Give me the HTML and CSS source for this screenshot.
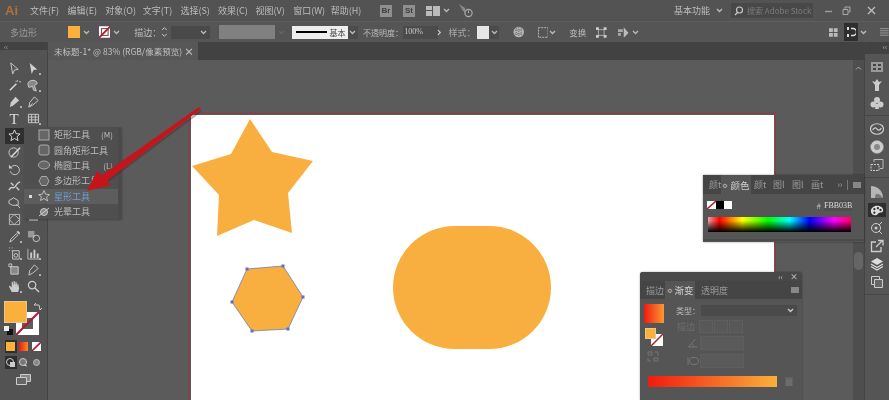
FILE: index.html
```html
<!DOCTYPE html>
<html lang="en">
<head>
    <meta charset="UTF-8">
    <title>Adobe Illustrator</title>
    <link rel="stylesheet" href="styles.css">
</head>
<body>
<div class="app">

    <!-- Menu bar -->
    <div class="menubar">
        <span class="logo">Ai</span>
        <nav class="menus">
            <span>文件(F)</span><span>编辑(E)</span><span>对象(O)</span><span>文字(T)</span><span>选择(S)</span><span>效果(C)</span><span>视图(V)</span><span>窗口(W)</span><span>帮助(H)</span>
        </nav>
        <span class="bridge">Br</span>
        <span class="bridge stock">St</span>
        <svg class="layout-icon" width="14" height="10" viewBox="0 0 14 10"><path d="M0 0h6v4H0zM0 5h6v5H0zM7 0h7v10H7z" fill="#bbb"/></svg>
        <svg class="chev" width="7" height="5" viewBox="0 0 7 5"><path d="M1 1l2.500 2.500L6 1" stroke="#bbb" stroke-width="1.300" fill="none"/></svg>
        <svg class="gpu-icon" width="16" height="15" viewBox="0 0 16 15"><path d="M1 1l6 4 1 4-3-1z" fill="#888"/><circle cx="10.500" cy="10" r="3.600" fill="none" stroke="#aaa" stroke-width="1.200"/><path d="M10.500 7.500v2.500" stroke="#aaa"/></svg>
        <span class="workspace-name">基本功能</span>
        <svg class="chev" width="7" height="5" viewBox="0 0 7 5"><path d="M1 1l2.500 2.500L6 1" stroke="#bbb" stroke-width="1.300" fill="none"/></svg>
        <div class="search">
            <svg width="10" height="10" viewBox="0 0 10 10"><circle cx="5.500" cy="4" r="3" fill="none" stroke="#ccc" stroke-width="1.100"/><path d="M3.500 6.500L1 9" stroke="#ccc" stroke-width="1.200"/></svg>
            <span>搜索 Adobe Stock</span>
        </div>
        <div class="window-btns">
            <svg width="9" height="9" viewBox="0 0 9 9"><path d="M1 5.500h7" stroke="#999" stroke-width="1.500"/></svg>
            <svg width="9" height="9" viewBox="0 0 9 9"><path d="M1 3.500h5v5H1zM3 3V1h5v5H6.500" fill="none" stroke="#aaa"/></svg>
            <svg width="9" height="9" viewBox="0 0 9 9"><path d="M1 1l7 7M8 1L1 8" stroke="#bbb" stroke-width="1.400"/></svg>
        </div>
    </div>

    <!-- Control bar -->
    <div class="optbar">
        <span class="sel-name">多边形</span>
        <span class="fill-swatch"></span>
        <svg class="chev" width="7" height="5" viewBox="0 0 7 5"><path d="M1 1l2.500 2.500L6 1" stroke="#bbb" stroke-width="1.300" fill="none"/></svg>
        <svg class="stroke-swatch" width="12" height="12" viewBox="0 0 12 12"><rect width="12" height="12" fill="#fff"/><path d="M0 12L12 0" stroke="#b01c2e" stroke-width="2"/><rect x="2.500" y="2.500" width="7" height="7" fill="none" stroke="#77323a"/></svg>
        <svg class="chev" width="7" height="5" viewBox="0 0 7 5"><path d="M1 1l2.500 2.500L6 1" stroke="#bbb" stroke-width="1.300" fill="none"/></svg>
        <span class="opt-label stroke-label">描边：</span>
        <svg class="spinner" width="7" height="12" viewBox="0 0 7 12"><path d="M1 4l2.500-2.500L6 4M1 8l2.500 2.500L6 8" stroke="#ccc" fill="none"/></svg>
        <span class="dark-input"></span>
        <span class="dark-drop"><svg width="7" height="5" viewBox="0 0 7 5"><path d="M1 1l2.500 2.500L6 1" stroke="#bbb" stroke-width="1.300" fill="none"/></svg></span>
        <span class="grey-box"></span>
        <svg class="grey-chev" width="7" height="5" viewBox="0 0 7 5"><path d="M1 1l2.500 2.500L6 1" stroke="#6a6a6a" stroke-width="1.200" fill="none"/></svg>
        <span class="stroke-preview"><i></i><b>基本</b></span>
        <span class="dark-drop small"><svg width="7" height="5" viewBox="0 0 7 5"><path d="M1 1l2.500 2.500L6 1" stroke="#bbb" stroke-width="1.300" fill="none"/></svg></span>
        <span class="opt-label opacity-label">不透明度：</span>
        <span class="opacity-input">100%</span>
        <svg class="opacity-more" width="5" height="7" viewBox="0 0 5 7"><path d="M1 1l2.500 2.500L1 6" stroke="#ccc" stroke-width="1.200" fill="none"/></svg>
        <span class="opt-label style-label">样式：</span>
        <span class="style-box"></span>
        <span class="dark-drop small"><svg width="7" height="5" viewBox="0 0 7 5"><path d="M1 1l2.500 2.500L6 1" stroke="#bbb" stroke-width="1.300" fill="none"/></svg></span>
        <svg class="globe" width="12" height="12" viewBox="0 0 12 12"><circle cx="6" cy="6" r="5.500" fill="#b5b5b5"/><path d="M2 4h8M2 8h8M6 1v10M3.500 2v8M8.500 2v8" stroke="#666" stroke-dasharray="1 1"/></svg>
        <svg class="dash-rect" width="11" height="11" viewBox="0 0 11 11"><rect x=".5" y=".5" width="10" height="10" fill="none" stroke="#bbb" stroke-dasharray="2 1"/></svg>
        <svg class="chev" width="7" height="5" viewBox="0 0 7 5"><path d="M1 1l2.500 2.500L6 1" stroke="#bbb" stroke-width="1.300" fill="none"/></svg>
        <span class="opt-label transform-label">变换</span>
        <svg class="align-a" width="11" height="11" viewBox="0 0 11 11"><path d="M2.500 2.500h6v6h-6z" fill="none" stroke="#aaa"/><path d="M0 0h3v3H0zM8 0h3v3H8zM0 8h3v3H0zM8 8h3v3H8z" fill="#ccc"/></svg>
        <svg class="align-b" width="12" height="12" viewBox="0 0 12 12"><path d="M0 3h5v3H0zM0 7h3v3H0z" fill="#aaa"/><path d="M6 1v11l5-5z" fill="#bbb"/></svg>
        <svg class="chev" width="7" height="5" viewBox="0 0 7 5"><path d="M1 1l2.500 2.500L6 1" stroke="#bbb" stroke-width="1.300" fill="none"/></svg>
        <svg class="snap-grid" width="9" height="9" viewBox="0 0 9 9"><path d="M0 0h4v4H0zM5 0h4v4H5zM0 5h4v4H0zM5 5h4v4H5z" fill="#bbb"/></svg>
        <span class="magnet"><svg width="9" height="10" viewBox="0 0 9 10"><path d="M4 1.500h2a3 3 0 010 7H4" fill="none" stroke="#ddd" stroke-width="1.400"/><path d="M0 0h2v3H0zM0 7h2v3H0z" fill="#ddd"/></svg></span>
        <svg class="chev" width="7" height="5" viewBox="0 0 7 5"><path d="M1 1l2.500 2.500L6 1" stroke="#bbb" stroke-width="1.300" fill="none"/></svg>
        <svg class="list-icon" width="9" height="8" viewBox="0 0 9 8"><path d="M0 .5h9M0 2.700h9M0 5h9M0 7.300h9" stroke="#999"/></svg>
    </div>

    <div class="main">

        <!-- Tools -->
        <aside class="toolbar">
            <div class="tool-head">‹‹</div>
            <div class="tool-grid">
                <svg viewBox="0 0 14 14"><path d="M3 1l8 7-4 .5L5 13z" fill="none" stroke="#ccc"/></svg>
                <svg viewBox="0 0 14 14"><path d="M3 1l8 7-4 .5L5 13z" fill="#d0d0d0"/><rect x="13" y="12" width="2" height="2" fill="#bbb"/></svg>
                <svg viewBox="0 0 14 14"><path d="M2 12l7-7" stroke="#ddd" stroke-width="1.500"/><path d="M10 1v2M12 3h2M8 2l1 1" stroke="#ccc"/></svg>
                <svg viewBox="0 0 14 14"><path d="M1 6a5 4 0 0110-1l-3 2 2 6-3-1-1-4-4 1z" fill="#888" stroke="#ccc"/><rect x="13" y="12" width="2" height="2" fill="#bbb"/></svg>
                <svg viewBox="0 0 14 14"><path d="M2 13l1-5 5-6 4 4-6 5z" fill="#ccc"/><rect x="13" y="12" width="2" height="2" fill="#bbb"/></svg>
                <svg viewBox="0 0 14 14"><path d="M2 13l1-5 5-6 4 4-6 5z" fill="none" stroke="#ccc"/><path d="M2 13l4-4" stroke="#ccc"/></svg>
                <span class="tool-t">T</span>
                <svg viewBox="0 0 14 14"><path d="M1.500 2.500h11v9h-11zM1.500 5.500h11M1.500 8.500h11M5 2.500v9M9 2.500v9" fill="none" stroke="#ccc"/><rect x="13" y="12" width="2" height="2" fill="#bbb"/></svg>
                <span class="tool-on"><svg viewBox="0 0 14 14"><path d="M7 1l1.800 4 4.200.4-3.200 2.800 1 4.300L7 10.200l-3.800 2.300 1-4.300L1 5.400 5.200 5z" fill="none" stroke="#ddd"/></svg></span>
                <span></span>
                <svg viewBox="0 0 14 14"><circle cx="6" cy="7" r="5" fill="none" stroke="#ccc"/><path d="M3 12L13 2" stroke="#ddd" stroke-width="1.500"/></svg>
                <span></span>
                <svg viewBox="0 0 14 14"><path d="M3 5a5 5 0 11-.5 4" fill="none" stroke="#ccc"/><path d="M1 2v4h4" fill="#ccc"/></svg>
                <span></span>
                <svg viewBox="0 0 14 14"><path d="M1 12c3-6 4 0 7-4s2-4 5-5M3 4l3 3M9 9l3 3" fill="none" stroke="#ccc" stroke-width="1.500"/></svg>
                <span></span>
                <svg viewBox="0 0 14 14"><path d="M1 5l5-3 5 3v5H5L1 8z" fill="none" stroke="#ccc"/><path d="M9 9l4 4" stroke="#ccc"/></svg>
                <span></span>
                <svg viewBox="0 0 14 14"><path d="M1.500 1.500h11v11h-11zM1.500 7l5-5.500L12.500 7l-6 5.500z" fill="none" stroke="#bbb"/></svg>
                <span class="tool-mini"></span>
                <svg viewBox="0 0 14 14"><path d="M2 13l1-3 6-6 1.500 1.500-6 6z" fill="none" stroke="#ccc"/><path d="M9 2l3 3 1-2-2-2z" fill="#ccc"/><rect x="13" y="12" width="2" height="2" fill="#bbb"/></svg>
                <svg viewBox="0 0 14 14"><rect x="1" y="1" width="7" height="7" fill="#999"/><circle cx="10" cy="9" r="3.500" fill="none" stroke="#ccc"/></svg>
                <svg viewBox="0 0 14 14"><path d="M5 4h7v9H5z" fill="none" stroke="#ccc"/><circle cx="8.500" cy="9" r="2" fill="none" stroke="#ccc"/><path d="M1 1h1M4 1h1M1 4h1M4 4h1" stroke="#ccc"/><rect x="13" y="12" width="2" height="2" fill="#bbb"/></svg>
                <svg viewBox="0 0 14 14"><path d="M1 2v11h12" fill="none" stroke="#bbb"/><path d="M3.500 12V6h2v6zM7 12V3h2v9zM10.500 12V7h2v5z" fill="#ccc"/><rect x="13" y="12" width="2" height="2" fill="#bbb"/></svg>
                <svg viewBox="0 0 14 14"><path d="M3 4h8v8H3z" fill="#888" stroke="#ccc"/><path d="M1 1h3v3H1z" fill="none" stroke="#ccc"/></svg>
                <svg viewBox="0 0 14 14"><path d="M2 13l1-5 5-6 4 4-6 5z" fill="none" stroke="#ccc"/><rect x="13" y="12" width="2" height="2" fill="#bbb"/></svg>
                <svg viewBox="0 0 14 14"><path d="M4 13L1 7l1-1 2 2V2h1l1 4V1h1l1 5V2h1l1 5V4h1l1 5-1 4z" fill="#ccc"/><rect x="13" y="12" width="2" height="2" fill="#bbb"/></svg>
                <svg viewBox="0 0 14 14"><circle cx="5.500" cy="5.500" r="4" fill="none" stroke="#ccc" stroke-width="1.300"/><path d="M8.500 8.500l4.500 4.500" stroke="#ccc" stroke-width="1.500"/></svg>
            </div>

            <div class="fill-stroke">
                <span class="big-fill"></span>
                <svg class="big-stroke" width="23" height="23" viewBox="0 0 23 23"><rect width="23" height="23" fill="#fff"/><rect x="6" y="6" width="11" height="11" fill="#5d5d5d"/><path d="M0 23L23 0" stroke="#b01c2e" stroke-width="2"/></svg>
                <svg class="swap" width="9" height="8" viewBox="0 0 9 8"><path d="M1 2h5l1 5M1 2l2-2M7 7l2-2" fill="none" stroke="#ccc"/></svg>
                <svg class="default-colors" width="9" height="9" viewBox="0 0 9 9"><rect x="3" y="3" width="6" height="6" fill="#111"/><rect x="0" y="0" width="5" height="5" fill="#eee"/></svg>
            </div>

            <div class="mode-row">
                <span class="mode-box on"><i class="solid"></i></span>
                <span class="mode-box"><i class="grad"></i></span>
                <span class="mode-box"><svg width="9" height="9" viewBox="0 0 9 9"><rect width="9" height="9" fill="#fff"/><path d="M0 9L9 0" stroke="#b01c2e" stroke-width="1.600"/></svg></span>
            </div>
            <div class="mode-row draw">
                <span class="mode-box on"><svg width="9" height="9" viewBox="0 0 9 9"><circle cx="4" cy="4" r="3.500" fill="none" stroke="#ccc"/><rect x="4" y="4" width="5" height="5" fill="#ccc"/></svg></span>
                <span class="mode-box"><svg width="9" height="9" viewBox="0 0 9 9"><circle cx="4" cy="4" r="3.500" fill="#777" stroke="#ccc"/><path d="M5 7l3 1" stroke="#ccc"/></svg></span>
                <span class="mode-box"><svg width="7" height="7" viewBox="0 0 7 7"><circle cx="3.500" cy="3.500" r="3" fill="#888" stroke="#bbb"/></svg></span>
            </div>
            <svg class="screen-mode" width="15" height="11" viewBox="0 0 15 11"><path d="M4.500.5h10v7h-10z" fill="#888" stroke="#ccc"/><path d="M.5 3.500h10v7H.5z" fill="#666" stroke="#ccc"/></svg>
        </aside>

        <div class="workspace">
            <div class="tabs">
                <div class="doc-tab"><span>未标题-1* @ 83% (RGB/像素预览)</span><b>×</b></div>
            </div>
            <div class="canvas">
                <svg class="artwork" width="805" height="340" viewBox="48 60 805 340">
                    <rect x="189.500" y="113" width="586" height="296" fill="none" stroke="#8f3a44" stroke-width="1.200"/>
                    <rect x="191" y="115" width="583" height="290" fill="#fff"/>
                    <path d="M250 119L272 152 313 161 288 193 292 233 254 220 217 236 219 195 192 166 231 154z" fill="#f9af40"/>
                    <path d="M247 269L283 266 303 297 288 329 252 331 232 302z" fill="#f9af40" stroke="#6f7fb0" stroke-width=".8"/>
                    <g fill="#5a6fd0">
                        <rect x="245.500" y="267.500" width="3" height="3"/><rect x="281.500" y="264.500" width="3" height="3"/><rect x="301.500" y="295.500" width="3" height="3"/><rect x="286.500" y="327.500" width="3" height="3"/><rect x="250.500" y="329.500" width="3" height="3"/><rect x="230.500" y="300.500" width="3" height="3"/>
                    </g>
                    <rect x="393" y="226" width="158" height="123" rx="61.500" fill="#f9af40"/>
                </svg>
            </div>
        </div>

        <div class="scrollbar">
            <svg width="7" height="4" viewBox="0 0 7 4"><path d="M1 3.500l2.500-2.500L6 3.500" stroke="#aaa" fill="none"/></svg>
            <span class="thumb"></span>
        </div>

        <!-- Panel dock -->
        <aside class="dock">
            <div class="dock-head">‹‹</div>
            <div class="dock-group first">
                <svg viewBox="0 0 14 14"><path d="M1 2h12v10H1z" fill="#999"/><path d="M3 4h3v2H3zM8 4h3v2H8zM3 8h3v2H3zM8 8h3v2H8z" fill="#444"/></svg>
                <svg viewBox="0 0 14 14"><path d="M5 13V7L2 3l3 1 2-3 2 3 3-1-3 4v6z" fill="#ccc"/></svg>
                <svg viewBox="0 0 14 14"><circle cx="7" cy="4" r="3" fill="#ccc"/><circle cx="3.500" cy="8.500" r="3" fill="#ccc"/><circle cx="10.500" cy="8.500" r="3" fill="#ccc"/><path d="M6 8h2l1 5H5z" fill="#ccc"/></svg>
            </div>
            <div class="dock-group">
                <svg viewBox="0 0 16 14"><ellipse cx="8" cy="7" rx="7.500" ry="6" fill="none" stroke="#ccc" stroke-width="1.400"/><path d="M3 8c2-3 4-3 5-1s3 2 5-1" fill="none" stroke="#ccc" stroke-width="1.400"/></svg>
                <svg viewBox="0 0 14 14"><circle cx="7" cy="7" r="6.500" fill="#ccc" stroke="#999" stroke-dasharray="1 1"/><circle cx="7" cy="7" r="3" fill="#888"/></svg>
                <svg viewBox="0 0 14 14"><path d="M4 4V1.500h9v9h-3" fill="none" stroke="#bbb"/><path d="M1 6.500h8v6H1z" fill="none" stroke="#ccc" stroke-dasharray="2 1"/></svg>
            </div>
            <div class="dock-group last">
                <svg viewBox="0 0 14 14"><path d="M1 1c7 0 12 5 12 12H1z" fill="#b5b5b5"/><path d="M5 13c0-5 3-6 8 0z" fill="#777"/></svg>
                <span class="dock-on"><svg viewBox="0 0 16 14"><path d="M8 2c4 0 7 2 7 5s-2 3-4 3-2 3-5 3-5-2-5-5 3-6 7-6z" fill="#ddd"/><circle cx="5" cy="6" r="1.300" fill="#333"/><circle cx="9" cy="5" r="1.300" fill="#333"/><circle cx="12" cy="7" r="1.300" fill="#333"/><circle cx="5" cy="10" r="1.300" fill="#333"/></svg></span>
                <svg viewBox="0 0 14 14"><circle cx="6" cy="7" r="4.500" fill="none" stroke="#ccc"/><circle cx="6" cy="7" r="1.500" fill="#ccc"/><path d="M9 4l3-3M9 10l3 3" stroke="#ccc"/></svg>
                <svg viewBox="0 0 14 14"><path d="M6 3H1.500v9.500h9.500V8" fill="none" stroke="#ccc" stroke-width="1.300"/><path d="M6 8l6-6M8 1.500h5v5" fill="none" stroke="#ccc" stroke-width="1.300"/></svg>
                <svg viewBox="0 0 14 14"><path d="M7 1l6 3.500L7 8 1 4.500z" fill="#ddd"/><path d="M1 7l6 3.500L13 7M1 9.500L7 13l6-3.500" fill="none" stroke="#ddd" stroke-width="1.200"/></svg>
                <svg viewBox="0 0 14 14"><path d="M1.500 1.500h8v8h-8z" fill="none" stroke="#ccc"/><path d="M4.500 4.500h8v8h-8z" fill="#666" stroke="#ccc"/></svg>
            </div>
        </aside>
    </div>

    <!-- Shape tool flyout -->
    <div class="flyout">
        <div class="fly-item"><svg viewBox="0 0 12 12"><rect x="1" y="1" width="10" height="10" fill="#666" stroke="#aaa"/></svg><span>矩形工具</span><em>(M)</em></div>
        <div class="fly-item"><svg viewBox="0 0 12 12"><rect x="1" y="1" width="10" height="10" rx="2" fill="#666" stroke="#aaa"/></svg><span>圆角矩形工具</span></div>
        <div class="fly-item"><svg viewBox="0 0 12 12"><ellipse cx="6" cy="6" rx="5.500" ry="4" fill="#666" stroke="#aaa"/></svg><span>椭圆工具</span><em>(L)</em></div>
        <div class="fly-item"><svg viewBox="0 0 12 12"><path d="M3.500 1.500h5L11 6 8.500 10.500h-5L1 6z" fill="#666" stroke="#aaa"/></svg><span>多边形工具</span></div>
        <div class="fly-item active"><svg viewBox="0 0 12 12"><path d="M6 .5l1.600 3.700 3.900.4-2.900 2.500.9 3.900L6 8.500l-3.500 2 .9-3.900L.5 4.600l3.900-.4z" fill="none" stroke="#bbb"/></svg><span>星形工具</span></div>
        <div class="fly-item"><svg viewBox="0 0 12 12"><circle cx="6" cy="6" r="3.500" fill="#888" stroke="#ccc"/><path d="M1 10L11 2" stroke="#ccc"/></svg><span>光晕工具</span></div>
    </div>

    <!-- Color panel -->
    <section class="panel color-panel">
        <div class="panel-tabs">
            <span class="tab-dim tab-first">颜t</span>
            <span class="tab-active"><small>≎</small>颜色</span>
            <span class="tab-dim">颜t</span><span class="tab-dim">图l</span><span class="tab-dim">图l</span><span class="tab-dim">画t</span>
            <span class="panel-tools">›› <i>|</i><svg width="8" height="6" viewBox="0 0 8 6"><rect width="8" height="6" fill="#888"/></svg></span>
        </div>
        <div class="color-row">
            <svg width="9" height="8" viewBox="0 0 9 8"><rect width="9" height="8" fill="#fff"/><path d="M0 8L9 0" stroke="#b01c2e" stroke-width="1.500"/></svg>
            <span class="chip black"></span><span class="chip white"></span>
            <span class="hash">#</span><span class="hex">FBB03B</span>
        </div>
        <div class="spectrum"></div>
        <div class="panel-grip"></div>
    </section>

    <!-- Gradient panel -->
    <section class="panel gradient-panel">
        <div class="panel-top"><span>‹‹</span><b>×</b></div>
        <div class="panel-tabs">
            <span class="tab-dim">描边</span>
            <span class="tab-active"><small>≎</small>渐变</span>
            <span class="tab-dim">透明度</span>
            <span class="panel-tools"><svg width="8" height="6" viewBox="0 0 8 6"><rect width="8" height="6" fill="#888"/></svg></span>
        </div>
        <div class="grad-body">
            <div class="grad-left">
                <span class="grad-thumb"></span>
                <div class="grad-swatches">
                    <span class="mini-fill"></span>
                    <svg class="mini-stroke" width="12" height="12" viewBox="0 0 12 12"><rect width="12" height="12" fill="#fff"/><path d="M0 12L12 0" stroke="#b01c2e" stroke-width="1.500"/></svg>
                </div>
                <svg class="reverse" width="12" height="11" viewBox="0 0 12 11"><path d="M1 1h4v3H1zM7 7h4v3H7zM8 1h3v4M1 7v3h3" fill="none" stroke="#777"/></svg>
            </div>
            <div class="grad-right">
                <div class="grad-row type-row"><label>类型：</label><span class="grad-select"><svg width="7" height="5" viewBox="0 0 7 5"><path d="M1 1l2.500 2.500L6 1" stroke="#ccc" stroke-width="1.300" fill="none"/></svg></span></div>
                <div class="grad-row btn-row"><label class="off">描边</label><span class="off-btn"></span><span class="off-btn"></span><span class="off-btn"></span></div>
                <div class="grad-row field-row"><svg width="11" height="10" viewBox="0 0 11 10"><path d="M1 9h9M1 9l7-8M6 9a4 4 0 00-1-3" fill="none" stroke="#777"/></svg><span class="off-select"></span></div>
                <div class="grad-row field-row"><svg width="12" height="10" viewBox="0 0 12 10"><ellipse cx="7" cy="5" rx="4.500" ry="3.500" fill="none" stroke="#777"/><path d="M1 1v8" stroke="#777"/></svg><span class="off-select"></span></div>
            </div>
        </div>
        <div class="grad-bar-row">
            <span class="grad-bar"></span>
            <svg width="8" height="9" viewBox="0 0 8 9"><path d="M1 2h6v7H1zM0 1h8M3 0h2" fill="#6c6c6c" stroke="#6c6c6c"/></svg>
        </div>
    </section>

    <!-- Red arrow annotation -->
    <svg class="arrow" width="889" height="400" viewBox="0 0 889 400">
        <path d="M201 111L108 181" stroke="#3a2a2a" stroke-opacity=".4" stroke-width="2"/>
        <path d="M199 107L201 109 107 181 111 185 87 191 97 171 102 175z" fill="#c3151b"/>
    </svg>
</div>
</body>
</html>
```

FILE: styles.css
```css
* {
    box-sizing: border-box;
}

html, body {
    margin: 0;
    padding: 0;
}

/* the reference is a soft, recompressed screenshot */
.app {
    position: relative;
    display: flex;
    flex-direction: column;
    width: 889px;
    height: 400px;
    overflow: hidden;
    background-color: #535353;
    color: #bcbcbc;
    font-family: "Noto Sans CJK SC", "Noto Sans", sans-serif;
    font-size: 9px;
    filter: blur(.4px);
}

.chev {
    flex: none;
}

/* Menu bar */
.menubar {
    display: flex;
    align-items: center;
    height: 21px;
    padding-left: 5px;
}

.logo {
    width: 25px;
    font-family: "Liberation Sans", sans-serif;
    font-size: 13px;
    font-weight: bold;
    color: #b0703a;
}

.menus {
    display: flex;
    width: 340px;
}

.menus span {
    width: 37.6px;
    font-size: 9px;
    white-space: nowrap;
}

.bridge {
    width: 12px;
    height: 12px;
    margin-left: 10px;
    background-color: #8f8f8f;
    color: #3e3e3e;
    font-family: "Liberation Sans", sans-serif;
    font-size: 8px;
    font-weight: bold;
    line-height: 12px;
    text-align: center;
}

.stock {
    margin-left: 11px;
}

.layout-icon {
    margin-left: 11px;
}

.menubar > .chev {
    margin-left: 3px;
}

.gpu-icon {
    margin-left: 8px;
}

.workspace-name {
    margin-left: 200px;
    font-size: 9px;
    white-space: nowrap;
}

.menubar > .workspace-name + .chev {
    margin-left: 6px;
}

.search {
    display: flex;
    align-items: center;
    gap: 3px;
    width: 82px;
    height: 15px;
    margin-left: 8px;
    padding-left: 3px;
    background-color: #484848;
    color: #7c7c7c;
    font-size: 8px;
    white-space: nowrap;
}

.window-btns {
    display: flex;
    gap: 9px;
    margin-left: 11px;
}

.window-btns svg:last-child {
    margin-left: 7px;
}

/* Control bar */
.optbar {
    display: flex;
    align-items: center;
    height: 21px;
    padding-left: 10px;
    border-top: 1px solid #5e5e5e;
    background-color: #555;
}

.sel-name {
    width: 61px;
    color: #9a9a9a;
}

.fill-swatch {
    width: 12px;
    height: 12px;
    margin-right: 3px;
    background-color: #fbb03b;
}

.optbar > .chev {
    margin-right: 3px;
}

.stroke-swatch {
    margin-left: 6px;
    margin-right: 3px;
}

.opt-label {
    white-space: nowrap;
}

.stroke-label {
    margin-left: 11px;
    width: 28px;
}

.spinner {
    margin-right: 3px;
}

.dark-input {
    width: 27px;
    height: 13px;
    background-color: #494949;
}

.dark-drop {
    display: flex;
    align-items: center;
    justify-content: center;
    width: 14px;
    height: 13px;
    background-color: #494949;
}

.dark-drop.small {
    width: 11px;
    background-color: #4b4b4b;
}

.grey-box {
    width: 58px;
    height: 14px;
    margin-left: 9px;
    background-color: #808080;
}

.grey-chev {
    margin-left: 3px;
    margin-right: 7px;
}

.stroke-preview {
    display: flex;
    align-items: center;
    width: 56px;
    height: 13px;
    padding: 0 2px 0 4px;
    background-color: #eee;
    color: #444;
}

.stroke-preview i {
    width: 31px;
    height: 2px;
    margin-right: 3px;
    background-color: #000;
}

.stroke-preview b {
    font-size: 8px;
    font-weight: normal;
    white-space: nowrap;
}

.opacity-label {
    width: 42px;
    margin-left: 5px;
    font-size: 8px;
}

.opacity-input {
    width: 36px;
    height: 13px;
    padding-left: 1px;
    background-color: #4b4b4b;
    color: #ccc;
    font-family: "Liberation Serif", serif;
    font-size: 8px;
    line-height: 11px;
}

.opacity-more {
    margin-left: -1px;
}

.style-label {
    width: 30px;
    margin-left: 7px;
    color: #a8a8a8;
}

.style-box {
    width: 12px;
    height: 13px;
    background-color: #e6e6e6;
}

.globe {
    margin-left: 14px;
}

.dash-rect {
    margin-left: 13px;
    margin-right: 1px;
}

.transform-label {
    width: 20px;
    margin-left: 10px;
    font-size: 8.5px;
}

.align-a {
    margin-left: 8px;
}

.align-b {
    margin-left: 11px;
    margin-right: 3px;
}

.snap-grid {
    margin-left: 187px;
}

.magnet {
    display: flex;
    align-items: center;
    justify-content: center;
    width: 15px;
    height: 18px;
    margin-left: 6px;
    margin-right: 2px;
    background-color: #2e2e2e;
}

.list-icon {
    margin-left: 10px;
}

/* Main area */
.main {
    display: flex;
    flex: 1;
    min-height: 0;
    background-color: #424242;
}

/* Tools */
.toolbar {
    display: flex;
    flex-direction: column;
    align-items: center;
    width: 48px;
    border-right: 1px solid #444;
    background: linear-gradient(#424242 8px, #535353 8px);
}

.tool-head {
    width: 100%;
    height: 8px;
    padding-left: 4px;
    color: #aaa;
    font-size: 7px;
    line-height: 8px;
}

.tool-grid {
    display: grid;
    grid-template-columns: 19px 19px;
    grid-auto-rows: 16.8px;
    justify-items: center;
    align-items: center;
    margin-top: 10px;
}

.tool-grid svg {
    width: 13px;
    height: 13px;
    overflow: visible;
}

.tool-t {
    color: #ddd;
    font-family: "Liberation Serif", serif;
    font-size: 15px;
    line-height: 16px;
}

.tool-on {
    display: flex;
    align-items: center;
    justify-content: center;
    width: 19px;
    height: 16px;
    background-color: #2f2f2f;
}

.tool-mini {
    width: 9px;
    height: 2px;
    background-color: #999;
}

.fill-stroke {
    position: relative;
    width: 40px;
    height: 37px;
    margin-top: 6px;
}

.big-fill {
    position: absolute;
    top: 0;
    left: 0;
    z-index: 2;
    width: 23px;
    height: 22px;
    border: 1px solid #e8c88c;
    background-color: #fbb03b;
}

.big-stroke {
    position: absolute;
    top: 11px;
    left: 12px;
}

.swap {
    position: absolute;
    top: 2px;
    left: 29px;
}

.default-colors {
    position: absolute;
    top: 25px;
    left: 0;
}

.mode-row {
    display: flex;
    gap: 3px;
    margin-top: 3px;
}

.mode-row.draw {
    margin-top: 5px;
}

.mode-box {
    display: flex;
    align-items: center;
    justify-content: center;
    width: 10px;
    height: 11px;
}

.mode-box.on {
    background-color: #2f2f2f;
    outline: 1px solid #2f2f2f;
}

.mode-box i {
    display: block;
    width: 9px;
    height: 9px;
}

.solid {
    background-color: #fbb03b;
}

.grad {
    background: linear-gradient(90deg, #f01a10, #f88a2a);
}

.screen-mode {
    margin-top: 6px;
}

/* Document area */
.workspace {
    display: flex;
    flex: 1;
    flex-direction: column;
    min-width: 0;
}

.tabs {
    display: flex;
    height: 18px;
    background-color: #424242;
}

.doc-tab {
    display: flex;
    align-items: center;
    justify-content: space-between;
    width: 150px;
    padding: 0 4px 0 6px;
    background-color: #575757;
    color: #c0c0c0;
    white-space: nowrap;
}

.doc-tab span {
    font-size: 8.5px;
}

.doc-tab b {
    font-size: 10px;
}

.canvas {
    position: relative;
    flex: 1;
    background-color: #5b5b5b;
}

.artwork {
    position: absolute;
    top: 0;
    left: 0;
}

.scrollbar {
    display: flex;
    flex-direction: column;
    align-items: center;
    width: 11px;
    padding-top: 24px;
    background-color: #4e4e4e;
    background-image: linear-gradient(#424242 18px, transparent 18px);
}

.thumb {
    width: 9px;
    height: 18px;
    margin-top: 182px;
    border-radius: 5px;
    background-color: #656565;
}

/* Panel dock */
.dock {
    display: flex;
    flex-direction: column;
    width: 25px;
    border-left: 1px solid #444;
    background-color: #555;
}

.dock-head {
    height: 12px;
    padding-right: 2px;
    background-color: #424242;
    color: #bbb;
    font-size: 7px;
    line-height: 8px;
    text-align: right;
}

.dock-group {
    display: flex;
    flex-direction: column;
    align-items: center;
    gap: 4px;
    padding: 6px 0 5px;
    border-bottom: 1px solid #474747;
}

.dock-group.first {
    padding-top: 6px;
}

.dock-group.last {
    padding-top: 7px;
}

.dock-group svg {
    width: 14px;
    height: 14px;
}

.dock-on {
    display: flex;
    align-items: center;
    justify-content: center;
    width: 18px;
    height: 14px;
    background-color: #2f2f2f;
}

/* Flyout */
.flyout {
    position: absolute;
    top: 127px;
    left: 24px;
    width: 97px;
    height: 92px;
    border-right: 3px solid #4a4a4a;
    background-color: #4f4f4f;
    box-shadow: 1px 1px 2px rgba(0, 0, 0, .25);
}

.fly-item {
    display: flex;
    align-items: center;
    height: 15.4px;
    padding-left: 14px;
    font-size: 9px;
    white-space: nowrap;
}

.fly-item svg {
    flex: none;
    width: 12px;
    height: 12px;
    margin-right: 4px;
}

.fly-item em {
    margin-left: auto;
    margin-right: 5px;
    font-size: 8px;
    font-style: normal;
}

.fly-item.active {
    position: relative;
    background-color: #5d5d5d;
    color: #6f9fd8;
}

.fly-item.active::before {
    content: "";
    position: absolute;
    left: 5px;
    top: 6px;
    width: 3px;
    height: 3px;
    background-color: #ddd;
}

/* Floating panels */
.panel {
    position: absolute;
    background-color: #555;
    box-shadow: 0 0 2px rgba(0, 0, 0, .4);
}

.panel-tabs {
    display: flex;
    align-items: stretch;
    background-color: #454545;
    color: #9a9a9a;
    white-space: nowrap;
}

.panel-tabs span {
    display: flex;
    align-items: center;
}

.tab-active {
    justify-content: center;
    width: 30px;
    background-color: #555;
    color: #d0d0d0;
    font-size: 9.5px;
}

.tab-active small {
    margin-right: 2px;
    font-size: 7px;
}

.panel-tools {
    gap: 4px;
    margin-left: auto;
    padding-right: 3px;
}

.panel-tools i {
    font-style: normal;
}

.color-panel {
    top: 175px;
    left: 703px;
    width: 161px;
    height: 67px;
}

.color-panel .panel-tabs {
    height: 19px;
}

.color-panel .tab-dim {
    width: 16px;
    margin-left: 3px;
    overflow: hidden;
}

.color-panel .tab-first {
    margin-left: 6px;
    width: 12px;
}

.color-row {
    display: flex;
    align-items: center;
    height: 22px;
    padding-left: 4px;
    padding-right: 12px;
}

.chip {
    width: 8px;
    height: 8px;
}

.black {
    background-color: #000;
}

.white {
    background-color: #fff;
}

.hash {
    margin-left: auto;
    margin-right: 3px;
    font-size: 8px;
}

.hex {
    width: 28px;
    height: 11px;
    background-color: #4e4e4e;
    color: #ddd;
    font-family: "Liberation Serif", serif;
    font-size: 8px;
    line-height: 11px;
    text-align: center;
}

.spectrum {
    position: relative;
    width: 143px;
    height: 15px;
    margin: 1px 0 0 5px;
    background:
        linear-gradient(rgba(0, 0, 0, 0), rgba(0, 0, 0, 0) 25%, #000 100%),
        linear-gradient(90deg, #e8a0a0, #f00 8%, #ff0 24%, #0f0 42%, #0ff 57%, #00f 71%, #f0f 88%, #f06);
}

.panel-grip {
    height: 2px;
    margin-top: 7px;
    background-color: #4a4a4a;
}

.gradient-panel {
    top: 272px;
    left: 640px;
    width: 162px;
    height: 128px;
    border-radius: 3px 3px 0 0;
}

.panel-top {
    display: flex;
    justify-content: flex-end;
    gap: 7px;
    height: 9px;
    padding-right: 4px;
    background-color: #484848;
    border-radius: 3px 3px 0 0;
    font-size: 8px;
    line-height: 9px;
}

.gradient-panel .panel-tabs {
    height: 18px;
}

.gradient-panel .tab-dim {
    padding: 0 0 0 6px;
}

.gradient-panel .tab-active {
    margin-left: 1px;
}

.grad-body {
    display: flex;
    padding: 5px 5px 0 4px;
}

.grad-left {
    display: flex;
    flex-direction: column;
    width: 32px;
}

.grad-thumb {
    width: 20px;
    height: 19px;
    background: linear-gradient(90deg, #f01a10, #fb9a30);
}

.grad-swatches {
    position: relative;
    height: 18px;
    margin-top: 5px;
}

.mini-fill {
    position: absolute;
    top: 0;
    left: 1px;
    z-index: 1;
    width: 11px;
    height: 11px;
    background-color: #fbb03b;
    border: 1px solid #e8c88c;
}

.mini-stroke {
    position: absolute;
    top: 6px;
    left: 7px;
}

.reverse {
    margin-top: 5px;
    margin-left: 3px;
}

.grad-right {
    display: flex;
    flex: 1;
    flex-direction: column;
}

.grad-row {
    display: flex;
    align-items: center;
}

.type-row {
    height: 12px;
}

.type-row label {
    width: 25px;
    font-size: 8px;
    white-space: nowrap;
}

.grad-select {
    display: flex;
    align-items: center;
    justify-content: flex-end;
    flex: 1;
    height: 11px;
    padding-right: 3px;
    background-color: #4a4a4a;
}

.btn-row {
    margin-top: 4px;
    padding-left: 1px;
}

.btn-row label {
    width: 22px;
    color: #6e6e6e;
}

.off-btn {
    width: 14px;
    height: 13px;
    margin-right: 1px;
    border: 1px solid #5f5f5f;
    background-color: #585858;
}

.field-row {
    height: 16px;
    margin-top: 2px;
    padding-left: 11px;
}

.field-row svg {
    width: 12px;
    margin-right: 1px;
}

.off-select {
    width: 44px;
    height: 14px;
    background-color: #5a5a5a;
    border: 1px solid #5e5e5e;
}

.grad-bar-row {
    display: flex;
    align-items: center;
    gap: 8px;
    margin-top: 7px;
    padding-left: 8px;
}

.grad-bar {
    width: 129px;
    height: 11px;
    background: linear-gradient(90deg, #f01a10, #fbb03b);
}

/* Annotation */
.arrow {
    position: absolute;
    top: 0;
    left: 0;
    pointer-events: none;
}
```
